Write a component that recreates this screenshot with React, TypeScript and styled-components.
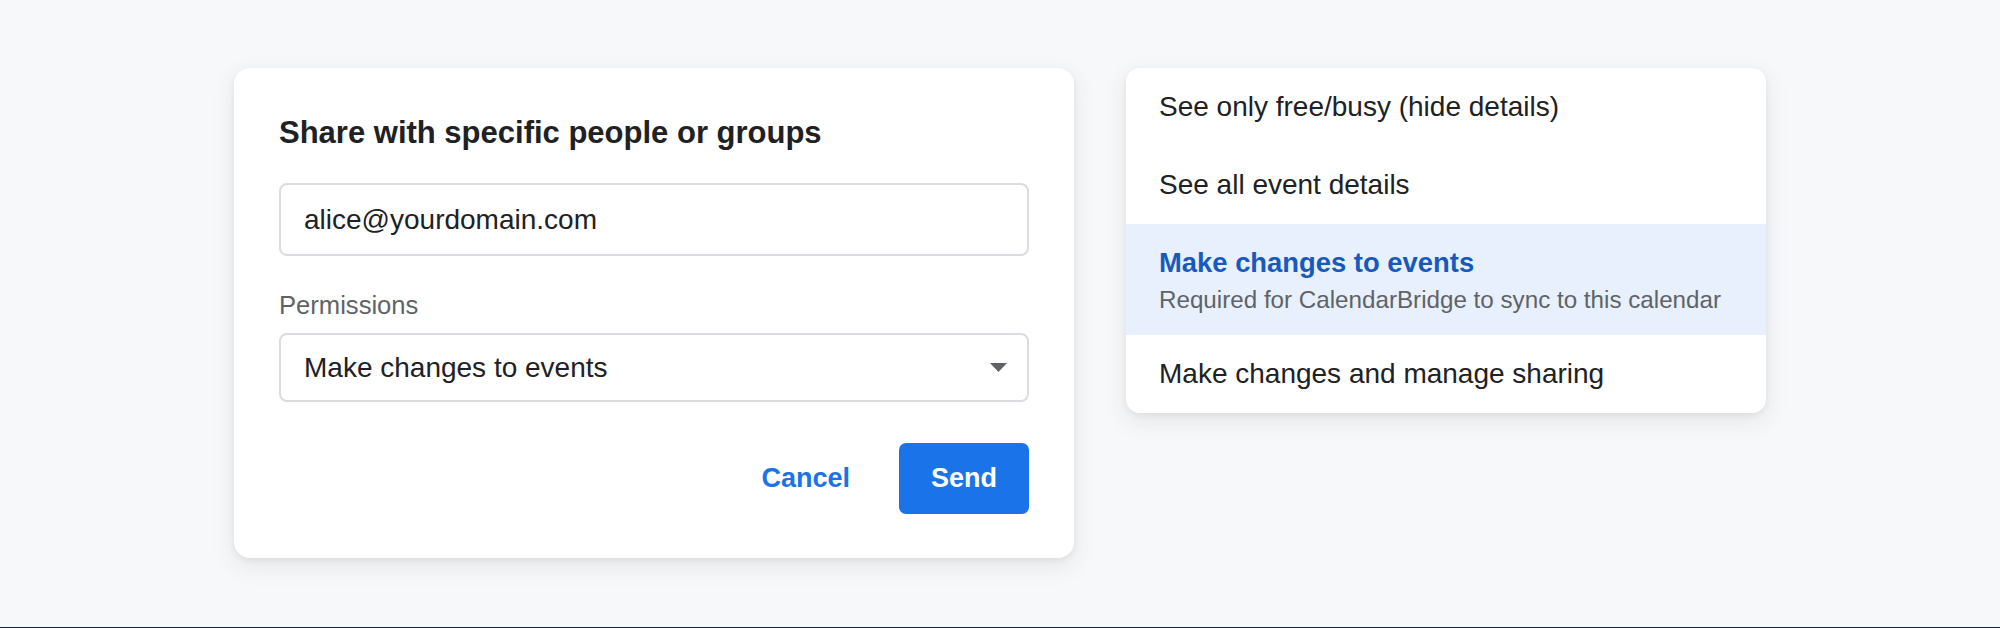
import React from "react";
import styled, { createGlobalStyle } from "styled-components";

const GlobalStyle = createGlobalStyle`
  html, body {
    margin: 0;
    padding: 0;
    background: #0f2440;
  }
  body {
    font-family: "Liberation Sans", Arial, Helvetica, sans-serif;
    -webkit-font-smoothing: antialiased;
  }
  * { box-sizing: border-box; }
`;

const Page = styled.div`
  height: 627px;
  background: #f7f8fa;
  display: flex;
  justify-content: center;
  align-items: flex-start;
  gap: 52px;
  padding-top: 68px;
`;

const Card = styled.section`
  width: 840px;
  background: #ffffff;
  border-radius: 16px;
  padding: 45px 45px 44px;
  box-shadow: 0 2px 6px rgba(60, 64, 67, 0.08), 0 8px 24px rgba(60, 64, 67, 0.1);
  display: flex;
  flex-direction: column;
`;

const Title = styled.h2`
  margin: 0 0 30px;
  font-size: 31px;
  line-height: 40px;
  font-weight: 700;
  color: #202124;
`;

const TextInput = styled.input`
  display: block;
  width: 100%;
  height: 73px;
  border: 2px solid #dadce0;
  border-radius: 8px;
  padding: 0 23px;
  font-family: inherit;
  font-size: 28px;
  color: #202124;
  background: #fff;
  outline: none;
`;

const FieldLabel = styled.div`
  margin-top: 31px;
  font-size: 25.6px;
  line-height: 36px;
  color: #5f6368;
`;

const SelectBox = styled.div`
  margin-top: 10px;
  height: 69px;
  border: 2px solid #dadce0;
  border-radius: 8px;
  padding: 0 20px 0 23px;
  display: flex;
  align-items: center;
  justify-content: space-between;
  font-size: 28px;
  color: #202124;
`;

const Actions = styled.div`
  margin-top: 41px;
  display: flex;
  justify-content: flex-end;
  align-items: center;
  gap: 25px;
`;

const Button = styled.button<{ $primary?: boolean }>`
  height: 71px;
  border: none;
  border-radius: 7px;
  padding: 0 ${(p) => (p.$primary ? "32px" : "24px")};
  font-family: inherit;
  font-size: 27px;
  font-weight: 700;
  cursor: pointer;
  background: ${(p) => (p.$primary ? "#1a73e8" : "transparent")};
  color: ${(p) => (p.$primary ? "#ffffff" : "#1a73e8")};
`;

const Menu = styled.ul`
  width: 640px;
  margin: 0;
  padding: 0;
  list-style: none;
  background: #ffffff;
  border-radius: 14px;
  overflow: hidden;
  box-shadow: 0 2px 6px rgba(60, 64, 67, 0.08), 0 8px 24px rgba(60, 64, 67, 0.1);
`;

const MenuItem = styled.li<{ $active?: boolean }>`
  padding: 19px 32px 19px 33px;
  background: ${(p) => (p.$active ? "#e8f0fe" : "transparent")};
  display: flex;
  flex-direction: column;
`;

const ItemLabel = styled.span<{ $active?: boolean }>`
  font-size: ${(p) => (p.$active ? "27.4px" : "28px")};
  line-height: 40px;
  font-weight: ${(p) => (p.$active ? 700 : 400)};
  color: ${(p) => (p.$active ? "#185abc" : "#202124")};
`;

const ItemHint = styled.span`
  font-size: 24.2px;
  line-height: 33px;
  color: #5f6368;
`;

const Caret = () => (
  <svg width="17" height="9" viewBox="0 0 17 9" aria-hidden="true">
    <path d="M0 0 H17 L8.5 9 Z" fill="#5f6368" />
  </svg>
);

const options = [
  { label: "See only free/busy (hide details)" },
  { label: "See all event details" },
  {
    label: "Make changes to events",
    hint: "Required for CalendarBridge to sync to this calendar",
    active: true,
  },
  { label: "Make changes and manage sharing" },
];

export default function App() {
  return (
    <>
      <GlobalStyle />
      <Page>
        <Card>
          <Title>Share with specific people or groups</Title>
          <TextInput readOnly defaultValue="alice@yourdomain.com" />
          <FieldLabel>Permissions</FieldLabel>
          <SelectBox>
            <span>Make changes to events</span>
            <Caret />
          </SelectBox>
          <Actions>
            <Button>Cancel</Button>
            <Button $primary>Send</Button>
          </Actions>
        </Card>
        <Menu>
          {options.map((o) => (
            <MenuItem key={o.label} $active={o.active}>
              <ItemLabel $active={o.active}>{o.label}</ItemLabel>
              {o.hint && <ItemHint>{o.hint}</ItemHint>}
            </MenuItem>
          ))}
        </Menu>
      </Page>
    </>
  );
}
